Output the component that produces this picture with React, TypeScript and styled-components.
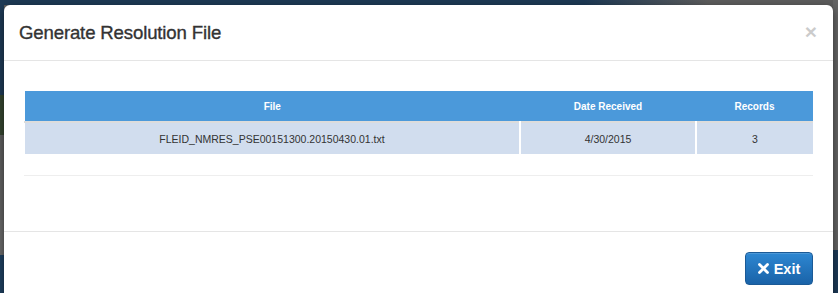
import React from "react";
import styled, { createGlobalStyle } from "styled-components";

const Global = createGlobalStyle`
  html, body { margin: 0; padding: 0; }
  body {
    width: 838px;
    height: 293px;
    overflow: hidden;
    font-family: "Liberation Sans", Arial, Helvetica, sans-serif;
    color: #333;
  }
`;

const Backdrop = styled.div`
  position: relative;
  width: 838px;
  height: 293px;
  display: flex;
  overflow: hidden;
  background: #5f5f5f;
`;

const Rail = styled.div<{ $w: number }>`
  width: ${(p) => p.$w}px;
  display: flex;
  flex-direction: column;
`;

const Band = styled.div<{ $h: number; $c: string }>`
  height: ${(p) => p.$h}px;
  flex: ${(p) => (p.$h === 0 ? 1 : "none")};
  background: ${(p) => p.$c};
`;

const Center = styled.div`
  flex: 1;
  display: flex;
  flex-direction: column;
`;

const TopBand = styled.div`
  height: 5px;
  background: linear-gradient(90deg, #1d3954 0%, #1d3954 70%, #5c5c5c 85%, #5c5c5c 100%);
`;

const Modal = styled.div`
  position: absolute;
  top: 5px;
  left: 4px;
  width: 829px;
  height: 320px;
  background: #fff;
  border-radius: 6px;
  box-shadow: 0 3px 9px rgba(0, 0, 0, 0.5);
  display: flex;
  flex-direction: column;
`;

const Header = styled.div`
  height: 56px;
  box-sizing: border-box;
  border-bottom: 1px solid #e5e5e5;
  display: flex;
  align-items: center;
  justify-content: space-between;
  padding: 0 16px 0 15px;
`;

const Title = styled.h4`
  margin: 0;
  font-size: 18.6px;
  font-weight: 400;
  -webkit-text-stroke: 0.35px #333;
  color: #333;
  letter-spacing: -0.15px;
  padding-top: 1px;
`;

const Close = styled.button`
  border: 0;
  background: transparent;
  padding: 0;
  font-family: "Liberation Sans", Arial, sans-serif;
  font-size: 21px;
  font-weight: bold;
  line-height: 1;
  color: #000;
  opacity: 0.2;
  margin-top: -3px;
  cursor: pointer;
`;

const Body = styled.div`
  padding: 30px 20px 0 20px;
  height: 171px;
  box-sizing: border-box;
  border-bottom: 1px solid #e5e5e5;
`;

const Table = styled.table`
  width: 100%;
  border-collapse: collapse;
`;

const Th = styled.th<{ $w?: number }>`
  background: #4b99da;
  color: #fff;
  font-weight: bold;
  font-size: 10px;
  height: 30px;
  padding: 0;
  text-align: center;
  width: ${(p) => (p.$w ? `${p.$w}px` : "auto")};
`;

const Tr = styled.tr`
  border-top: 2px solid #dcdcdc;
`;

const Td = styled.td<{ $first?: boolean }>`
  background: #d1ddee;
  color: #333;
  font-size: 10.5px;
  height: 31px;
  padding: 0;
  text-align: center;
  border-left: ${(p) => (p.$first ? "1px solid #fff" : "2px solid #fff")};
`;

const Rule = styled.hr`
  border: 0;
  border-top: 1px solid #eeeeee;
  margin: 21px 0 0 0;
`;

const Footer = styled.div`
  display: flex;
  justify-content: flex-end;
  padding: 20px 20px 0 20px;
`;

const ExitButton = styled.button`
  width: 68px;
  height: 33px;
  border-radius: 4px;
  border: 1px solid #1b5a96;
  background: linear-gradient(180deg, #2d87d2 0%, #1a63a8 100%);
  color: #fff;
  font-family: "Liberation Sans", Arial, sans-serif;
  font-size: 14.5px;
  font-weight: bold;
  display: flex;
  align-items: center;
  justify-content: center;
  gap: 5px;
  padding: 0;
  box-shadow: inset 0 1px 0 rgba(255, 255, 255, 0.15);
`;

const XIcon = () => (
  <svg width="11" height="11" viewBox="0 0 11 11">
    <path d="M1.5 1.5 L9.5 9.5 M9.5 1.5 L1.5 9.5" stroke="#fff" strokeWidth="2.8" strokeLinecap="round" />
  </svg>
);

export default function App() {
  return (
    <>
      <Global />
      <Backdrop>
        <Rail $w={4}>
          <Band $h={95} $c="#1e3a55" />
          <Band $h={40} $c="#35452f" />
          <Band $h={35} $c="#5e5e5e" />
          <Band $h={50} $c="#626262" />
          <Band $h={35} $c="#6a6a6a" />
          <Band $h={0} $c="#1f4060" />
        </Rail>
        <Center>
          <TopBand />
          <Band $h={0} $c="#5d5d5d" />
        </Center>
        <Rail $w={5}>
          <Band $h={250} $c="#646464" />
          <Band $h={0} $c="#1c3a57" />
        </Rail>
        <Modal>
          <Header>
            <Title>Generate Resolution File</Title>
            <Close aria-label="Close">×</Close>
          </Header>
          <Body>
            <Table>
              <thead>
                <tr>
                  <Th>File</Th>
                  <Th $w={176}>Date Received</Th>
                  <Th $w={117}>Records</Th>
                </tr>
              </thead>
              <tbody>
                <Tr>
                  <Td $first>FLEID_NMRES_PSE00151300.20150430.01.txt</Td>
                  <Td>4/30/2015</Td>
                  <Td>3</Td>
                </Tr>
              </tbody>
            </Table>
            <Rule />
          </Body>
          <Footer>
            <ExitButton>
              <XIcon />
              Exit
            </ExitButton>
          </Footer>
        </Modal>
      </Backdrop>
    </>
  );
}
